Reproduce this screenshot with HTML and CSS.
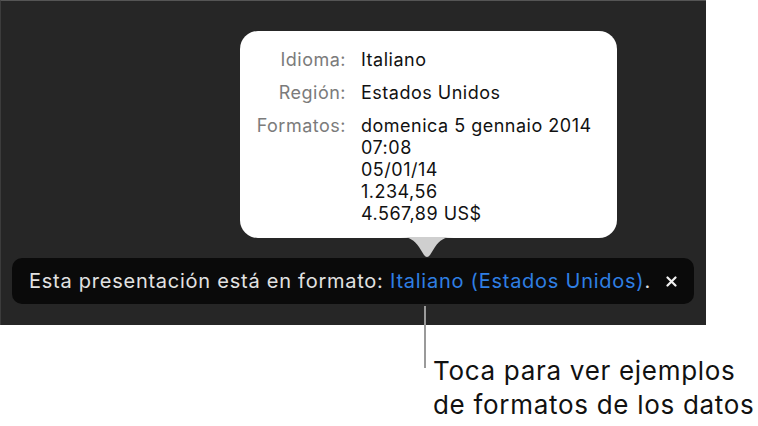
FILE: index.html
```html
<!DOCTYPE html>
<html lang="es">
<head>
<meta charset="utf-8">
<link rel="stylesheet" href="styles.css">
</head>
<body>
<div class="stage">
  <div class="panel">
    <div class="popover">
      <div class="grid">
        <div class="label">Idioma:</div>
        <div class="value">Italiano</div>
        <div class="label">Región:</div>
        <div class="value">Estados Unidos</div>
        <div class="label">Formatos:</div>
        <div class="value">domenica 5 gennaio 2014<br>07:08<br>05/01/14<br>1.234,56<br>4.567,89 US$</div>
      </div>
    </div>
    <svg class="arrow" width="54" height="22" viewBox="0 0 54 22">
      <path d="M0 0 C10 0 14 3 19 10 L24 18 Q27 22 30 18 L35 10 C40 3 44 0 54 0 Z" fill="#cfcfcf"/>
    </svg>
    <div class="bar">
      <span class="msg">Esta presentación está en formato: <span class="link">Italiano (Estados Unidos)</span>.</span>
      <svg class="close" width="11" height="11" viewBox="0 0 11 11">
        <path d="M1.5 1.5 L9.5 9.5 M9.5 1.5 L1.5 9.5" stroke="#f2f2f2" stroke-width="2.2" stroke-linecap="round"/>
      </svg>
    </div>
  </div>
  <div class="callout-line"></div>
  <p class="callout">Toca para ver ejemplos<br>de formatos de los datos</p>
</div>
</body>
</html>
```
FILE: styles.css
```css
html, body {
  margin: 0;
  padding: 0;
  background: #ffffff;
}
body {
  font-family: Inter, "Noto Sans", sans-serif;
}
.stage {
  position: relative;
  width: 758px;
  height: 426px;
  overflow: hidden;
}
.panel {
  width: 705px;
  background: #262626;
  border-top: 1px solid #555555;
  border-left: 1px solid #3c3c3c;
  display: flex;
  flex-direction: column;
  align-items: flex-start;
  box-sizing: content-box;
  padding-top: 30px;
  height: 294px;
}
.popover {
  margin-left: 239px;
  width: 377px;
  height: 207px;
  background: #ffffff;
  border-radius: 18px;
  box-sizing: border-box;
  padding-top: 18px;
}
.grid {
  display: grid;
  grid-template-columns: 106px auto;
  column-gap: 15px;
  row-gap: 11px;
  font-size: 18px;
  letter-spacing: 0.5px;
  line-height: 22px;
}
.label {
  text-align: right;
  color: #7b7b7b;
}
.value {
  color: #111111;
}
.arrow {
  display: block;
  margin-left: 399px;
  margin-top: -1px;
}
.bar {
  margin-left: 11px;
  margin-top: -1px;
  width: 682px;
  height: 46px;
  background: #0a0a0a;
  border-radius: 10px;
  box-sizing: border-box;
  padding: 0 17px 0 17px;
  display: flex;
  align-items: center;
  justify-content: space-between;
}
.msg {
  color: #e2e2e2;
  font-size: 20px;
  letter-spacing: 0.75px;
}
.link {
  color: #2f7fe3;
}
.close {
  display: block;
}
.callout-line {
  position: absolute;
  left: 424px;
  top: 306px;
  width: 2px;
  height: 62px;
  background: #9a9a9a;
}
.callout {
  margin: 29px 0 0 433px;
  font-size: 26px;
  letter-spacing: 0.7px;
  line-height: 34px;
  color: #111111;
}
```
